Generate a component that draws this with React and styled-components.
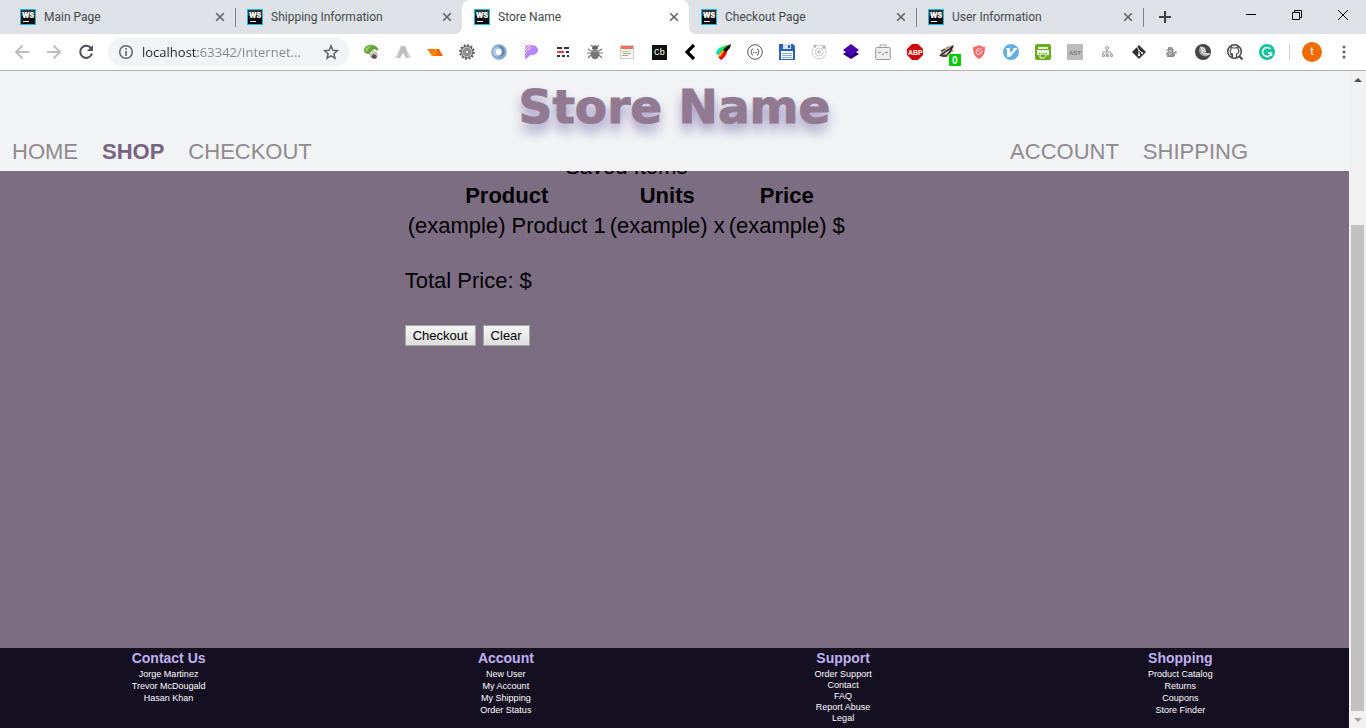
import React from 'react';
import styled, { createGlobalStyle } from 'styled-components';

const Global = createGlobalStyle`
  * { box-sizing: border-box; }
  body { margin: 0; font-family: "Liberation Sans", Arial, sans-serif; }
  button, input { font: inherit; }
  ul { margin: 0; padding: 0; list-style: none; }
`;

const Browser = styled.div`
  display: flex;
  flex-direction: column;
  min-height: 100vh;
`;

/* ---------- tab strip ---------- */

const TabStrip = styled.div`
  display: flex;
  height: 34px;
  padding-left: 8px;
  background: #dee1e6;
  font-family: Roboto, "Noto Sans", sans-serif;
  font-size: 12px;
`;

const Tab = styled.div`
  position: relative;
  display: flex;
  flex: 0 1 227px;
  min-width: 0;
  align-items: center;
  padding: 0 8px 0 12px;
  color: #45494d;
  background: ${(p) => (p.$active ? '#fff' : 'transparent')};
  border-radius: 8px 8px 0 0;

  ${(p) => p.$active && `
    &::before, &::after {
      content: "";
      position: absolute;
      bottom: 0;
      width: 8px;
      height: 8px;
    }
    &::before { left: -8px; background: radial-gradient(circle at 0 0, transparent 8px, #fff 8px); }
    &::after { right: -8px; background: radial-gradient(circle at 100% 0, transparent 8px, #fff 8px); }
  `}
`;

const TabDivider = styled.span`
  position: absolute;
  right: -1px;
  top: 8px;
  width: 1px;
  height: 19px;
  background: #808387;
`;

const TabTitle = styled.button`
  flex: 1;
  min-width: 0;
  padding: 0 0 0 8px;
  border: 0;
  background: none;
  color: inherit;
  text-align: left;
  white-space: nowrap;
  overflow: hidden;
`;

const IconButton = styled.button`
  display: flex;
  flex: none;
  align-items: center;
  justify-content: center;
  width: ${(p) => p.$w || 16}px;
  height: ${(p) => p.$h || 16}px;
  padding: 0;
  border: 0;
  background: none;
  color: ${(p) => p.$color || '#5f6368'};
`;

const WindowControls = styled.div`
  display: flex;
  margin-left: auto;
`;

/* ---------- toolbar ---------- */

const Toolbar = styled.div`
  display: flex;
  align-items: center;
  height: 37px;
  padding: 0 6px;
  background: #fff;
  border-bottom: 1px solid #b6b0b5;
`;

const AddressBar = styled.div`
  display: flex;
  flex: 1;
  min-width: 0;
  align-items: center;
  height: 28px;
  margin: 0 6px;
  padding: 0 10px;
  border-radius: 14px;
  background: #f1f3f4;
`;

const AddressInput = styled.input`
  flex: 1;
  min-width: 0;
  margin-left: 8px;
  padding: 0;
  border: 0;
  outline: 0;
  font-family: "Open Sans", "Noto Sans", sans-serif;
  font-size: 13px;
  color: transparent;
  background: linear-gradient(to right, #202124 56px, #80868b 56px);
  -webkit-background-clip: text;
  background-clip: text;
`;

const Extensions = styled.div`
  display: flex;
`;

const ToolbarDivider = styled.span`
  width: 1px;
  height: 16px;
  margin: 0 12px 0 6px;
  background: #cfd1d4;
`;

const Avatar = styled.button`
  width: 20px;
  height: 20px;
  margin-right: 6px;
  padding: 0;
  border: 0;
  border-radius: 50%;
  background: #ef6c00;
  color: #fff;
  font-family: Roboto, sans-serif;
  font-size: 11px;
  line-height: 20px;
`;

/* ---------- page ---------- */

const Viewport = styled.div`
  display: flex;
  flex: 1;
`;

const Page = styled.div`
  display: flex;
  flex: 1;
  min-width: 0;
  flex-direction: column;
  background: #7d6d83;
`;

const Header = styled.header`
  height: 100px;
  background: #f1f3f5;
`;

const StoreTitle = styled.h1`
  margin: 0;
  padding-top: 4px;
  color: #917991;
  font-family: "Arial Black", "DejaVu Sans", sans-serif;
  font-size: 47px;
  font-weight: 900;
  line-height: 64px;
  text-align: center;
  text-shadow: 0 8px 12px #9c92be;
  -webkit-text-stroke: 1px #917991;
`;

const Nav = styled.nav`
  display: flex;
  justify-content: space-between;
  padding-right: 89px;
`;

const NavGroup = styled.div`
  display: flex;
`;

const NavLink = styled.a`
  padding: 0 12px;
  color: ${(p) => (p.$active ? '#766482' : '#8f8a90')};
  font-size: 22px;
  font-weight: ${(p) => (p.$active ? 700 : 400)};
  line-height: 26px;
  text-decoration: none;
`;

const Main = styled.main`
  flex: 1;
  overflow: hidden;
  padding-left: 30%;
  color: #000;
  font-size: 22px;
  line-height: 26px;
`;

const SavedItems = styled.table`
  margin-top: -17px;
  border-spacing: 2px;

  th, td { padding: 1px; }
  td { white-space: nowrap; }
`;

const Total = styled.p`
  margin: 26px 0 31px;
`;

const Actions = styled.div`
  display: flex;
  gap: 7px;
`;

const ActionButton = styled.button`
  height: 21px;
  padding: 0 7px;
  border: 1px solid #a6a6a6;
  background: linear-gradient(#f6f6f6, #dddddd);
  color: #000;
  font-size: 13px;
  line-height: 19px;
`;

const Footer = styled.footer`
  display: grid;
  grid-template-columns: repeat(4, 1fr);
  height: 80px;
  background: #150f22;
  text-align: center;
`;

const FooterTitle = styled.h2`
  margin: 0;
  color: #bfb0ee;
  font-size: 14px;
  line-height: ${(p) => (p.$dense ? 21 : 20)}px;
`;

const FooterItem = styled.li`
  font-size: 9px;
  line-height: ${(p) => (p.$dense ? 11 : 12)}px;

  a { color: #fff; text-decoration: none; }
`;

/* ---------- scrollbar ---------- */

const Scrollbar = styled.div`
  display: flex;
  flex-direction: column;
  width: 17px;
  padding: 0 2px;
  background: #f1f1f1;
`;

const ScrollSpace = styled.div`
  flex: 137;
`;

const ScrollThumb = styled.div`
  flex: 486;
  background: #c1c1c1;
`;

/* ---------- icons ---------- */

const Icon = ({ size = 16, children, ...rest }) => (
  <svg width={size} height={size} viewBox={`0 0 ${size} ${size}`} fill="none" aria-hidden="true" {...rest}>
    {children}
  </svg>
);

const Favicon = () => (
  <Icon>
    <rect x=".5" y=".5" width="15" height="15" fill="#080808" stroke="#18b9e4" />
    <path d="M1 1h14v6H1z" fill="#333" />
    <text x="2" y="8.500" fill="#fff" fontSize="7" fontWeight="900" fontFamily="Inter, sans-serif">WS</text>
    <path d="M3 12.500h6" stroke="#fff" />
  </Icon>
);

const CloseIcon = () => (
  <Icon size={10}><path d="m1.200 1.200 7.600 7.600m0-7.600L1.200 8.800" stroke="currentColor" strokeWidth="1.600" /></Icon>
);

const mono = '"Liberation Mono", monospace';
const sans = '"Liberation Sans", sans-serif';

const extensions = [
  ['Cleaner', <>
    <path d="M1 7C1 2 6 0 10 1c4 1 6 4 5 6l-4-2-5 5C4 10 1 9 1 7z" fill="#62a536" />
    <path d="M2 6c2-4 6-5 9-4-3 0-6 2-7 6z" fill="#9dd36b" />
    <path d="m6 10 4-3 4 1 1 4-3 3-4-1z" fill="#c5beb9" /><path d="m10 10 3 1 1 3-3 1-3-2z" fill="#5e5552" /><path d="m8 8 2 2" stroke="#eee" />
  </>],
  ['Angular', <><path d="M6 2 0 14h4l3-7zM10 2l6 12h-4L9 7z" fill="#d3d3d3" /><path d="M6 2h2v7l-3 5H3zM8 2h2l3 12h-2L8 9z" fill="#bdbdbd" /></>],
  ['Layout', <><path d="M0 5h9l3 7H5z" fill="#ff7a00" /><path d="M9 5h3l4 7h-5z" fill="#f26400" /><path d="m5 12 4-7" stroke="#ffb366" strokeWidth=".7" /></>],
  ['Settings', <>
    <circle cx="8" cy="8" r="6.700" stroke="#5b5b5b" strokeWidth="2.200" strokeDasharray="2 1.500" />
    <circle cx="8" cy="8" r="5.800" fill="#bbb" stroke="#666" /><circle cx="8" cy="8" r="3.600" stroke="#777" />
    <circle cx="8" cy="8" r="2" fill="#f2f2f2" stroke="#555" />
  </>],
  ['JSON', <><circle cx="8" cy="8" r="5.600" stroke="#88a8cd" strokeWidth="4.400" /><path d="M7 2c5-1 8 4 6 8-2 3-5 3-6 2 5-1 5-6 0-10z" fill="#6688b7" /><path d="M3 11C0 6 4 2 8 3 4 5 4 9 7 13" fill="#b5cbe4" /></>],
  ['Pesticide', <>
    <defs><linearGradient id="pp" x1="0" y1="0" x2="1" y2="1"><stop stopColor="#e187f0" /><stop offset=".5" stopColor="#b985fb" /><stop offset="1" stopColor="#8a9cff" /></linearGradient></defs>
    <path d="M2 1h7c4 0 6 3 6 5.500S12 11 8 11c-2 0-3 4-6 4z" fill="url(#pp)" /><path d="m1 4 4-4M1 7l7-7M1 10l7-7" stroke="#fff" strokeWidth=".9" />
  </>],
  ['Blocks', <><path d="M2 4h5m2 0h5M11 8h3M2 12h3m2 0h3m2 0h2" stroke="#333" strokeWidth="2" /><path d="M2 8h7" stroke="#f44336" strokeWidth="2" /></>],
  ['Bug', <>
    <path d="m1 5 3 2M0 9h4m-3 5 3-3m11-6-3 2m4 2h-4m3 5-3-3M6 3 4 1m6 2 2-2" stroke="#777" strokeWidth="1.200" />
    <ellipse cx="8" cy="10" rx="4.300" ry="5.300" fill="#777" /><path d="M5 5c0-5 6-5 6 0z" fill="#656565" /><path d="M4 7h8" stroke="#aaa" />
  </>],
  ['Reader', <>
    <rect x="1.500" y="1.500" width="13" height="13" fill="#f7f7f7" stroke="#ccc" /><path d="M2 2h12v3H2z" fill="#f26d68" /><path d="M3 7.500h8" stroke="#e6c34b" /><path d="M4 9.500h8" stroke="#78bd7b" /><path d="M3 11.500h6" stroke="#e48b88" />
  </>],
  ['Codebase', <><rect x="1" y="1" width="15" height="15" fill="#111" /><text x="3" y="11" fill="#fff" fontSize="9" fontFamily={mono}>Cb</text></>],
  ['Collapse', <path d="M11 1 4 8l7 7" stroke="#000" strokeWidth="3.200" />],
  ['Color picker', <>
    <path d="M2 11C1 6 8 1 14 1L7 9z" fill="#1de54a" /><path d="M1 10c0-3 2-6 5-7L4 10z" fill="#0dd" />
    <path d="M4 10 13 3c0 5-3 11-7 13-2-1-3-3-2-6z" fill="#f20c0c" /><path d="m3 11 8-7-6 9z" fill="#fb0" /><path d="m8 6 4-4 4-2-1 4-4 4z" fill="#111" />
  </>],
  ['Format JSON', <><circle cx="8" cy="8" r="7.300" stroke="#555" /><path d="M6 5c-2 0-1 2-2 3 1 1 0 3 2 3m4-6c2 0 1 2 2 3-1 1 0 3-2 3" stroke="#555" /><path d="M6 8.500h4" stroke="#555" strokeDasharray="1 .5" /></>],
  ['Save page', <><path d="M0 0h14l2 2v14H0z" fill="#2d61b8" /><path d="M4 0h8v5H4z" fill="#d9e7f8" /><path d="M9 1h2v3H9z" fill="#2d61b8" /><path d="M2 7h12v8H2z" fill="#f6f9fd" /><path d="M3 9.500h10m-10 2h10m-10 2h10" stroke="#8bafda" /></>],
  ['Orbit', <><circle cx="8" cy="8" r="7" stroke="#ccc" /><circle cx="8" cy="8" r="4" stroke="#ccc" /><circle cx="8" cy="8" r="2" fill="#ccc" /><circle cx="4" cy="2" r="1.500" fill="#aaa" /><circle cx="13" cy="3" r="2" fill="#bbb" /></>],
  ['Layers', <><path d="m0 10 8 5 8-5-8-5z" fill="#280085" /><path d="m0 6 8-6 8 6-8 6z" fill="#4b06ae" /></>],
  ['Clipboard', <><rect x=".7" y="3.500" width="14.600" height="12" rx="1" fill="#eee" stroke="#999" /><path d="M5 3V1h6v2" stroke="#999" /><path d="M3 8q1.500 1.500 3 0m4 0q1.500 1.500 3 0M7 10h2" stroke="#777" /></>],
  ['AdBlock', <><path d="M5 0h6l5 5v6l-5 5H5l-5-5V5z" fill="#cf0706" /><text x="1" y="10.800" fill="#fff" fontSize="7" fontWeight="700" fontFamily={sans}>ABP</text></>],
  ['Tracker', <>
    <path d="m0 12 3-5 3-1 1-3 4-1 4-1-2 4 2 2-4 2-2 3-5 1z" fill="#b59a86" /><path d="m1 12 5-4 5-3 3-3-3 6-4 3M2 7l4-2M3 12h5" stroke="#222" strokeWidth="1.300" /><path d="m6 9 4-2-3 4z" fill="#eee" />
    <rect x="10" y="10" width="12" height="12" rx="1" fill="#0c0" /><text x="13" y="20" fill="#fff" fontSize="10" fontWeight="700" fontFamily={sans}>0</text>
  </>],
  ['Shield', <><path d="M8 1c2 1 4 2 6 2 0 6-1 9-6 12-5-3-6-6-6-12 2 0 4-1 6-2z" fill="#f26b6b" /><circle cx="8" cy="7.500" r="3" stroke="#fbd0d0" /><path d="m6 6 4 3" stroke="#fbd0d0" /></>],
  ['Vimium', <><circle cx="8" cy="8" r="8" fill="#62aee5" /><path d="M3 4h4v5l4-4-1-1h4v1L7 13H4V5H3z" fill="#fff" /></>],
  ['Print', <><rect width="16" height="16" rx="2" fill="#6aaa1e" /><path d="M3 3h10v2H3zM2 6h12v5h-2V9H4v2H2z" fill="#e9f4dc" /><path d="M5 10h6v2l-2 2H5z" stroke="#fff" /></>],
  ['AST', <><rect width="16" height="16" fill="#bcbcbc" /><text x="2" y="10.500" fill="#777" fontSize="6" fontWeight="700" fontFamily={sans}>AST</text></>],
  ['Sitemap', <><path d="M8 5v7M4 11V8h8v3" stroke="#999" /><circle cx="8" cy="4" r="1.500" stroke="#999" /><path d="M3.500 10.500h2v2h-2zm4 0h2v2h-2zm4 0h2v2h-2z" stroke="#999" /></>],
  ['Git', <><path d="m8 1 7 7-7 7-7-7z" fill="#333" /><path d="m6 3 2 3v5m0-5 3 3" stroke="#fff" /><circle cx="8" cy="11" r="1.200" fill="#fff" /><circle cx="11" cy="9" r="1" fill="#fff" /></>],
  ['Helper', <><path d="M5 3h4l2 3-1 1 2 2v3H4L3 10l2-3z" fill="#999" /><path d="M3 7l3-3m5 5 2-2v3M4 12.500h7" stroke="#888" /><path d="M6 7h3M6 10h2" stroke="#ddd" /></>],
  ['Notes', <>
    <circle cx="8" cy="8" r="8" fill="#444" /><path d="M5 3c3-1 6 0 6 3v3h4c-1 3-4 4-7 3-3-1-4-3-4-6z" fill="#a5a5a5" />
    <path d="M5 3c1 0 2 1 2 3 0 3 1 4 4 4h4M7 3l3 3M8 6l3 2" stroke="#fff" />
  </>],
  ['GitHub search', <><circle cx="7.500" cy="7.500" r="6.800" stroke="#444" strokeWidth="1.500" /><path d="m12 12 3.500 3.500" stroke="#444" strokeWidth="2" /><path d="M5 13v-2l-2-1M5.500 13v-3C2 9 3 6 4 5.500V3l2 1h3l2-1v2.500c1 .5 2 3.500-1.500 4.500v3" stroke="#444" strokeWidth="1.200" /></>],
  ['Grammarly', <><circle cx="8" cy="8" r="8" fill="#15c39a" /><path d="M11.500 5a4.500 4.500 0 1 0 1 4H9m3.500 0v3" stroke="#fff" strokeWidth="1.500" /></>],
];

const tabs = ['Main Page', 'Shipping Information', 'Store Name', 'Checkout Page', 'User Information'];

const footerColumns = [
  { title: 'Contact Us', items: ['Jorge Martinez', 'Trevor McDougald', 'Hasan Khan'] },
  { title: 'Account', items: ['New User', 'My Account', 'My Shipping', 'Order Status'] },
  { title: 'Support', items: ['Order Support', 'Contact', 'FAQ', 'Report Abuse', 'Legal'], dense: true },
  { title: 'Shopping', items: ['Product Catalog', 'Returns', 'Coupons', 'Store Finder'] },
];

const ACTIVE_TAB = 2;

export default function App() {
  return (
    <Browser>
      <Global />
      <TabStrip>
        {tabs.map((title, i) => (
          <Tab key={title} $active={i === ACTIVE_TAB}>
            <Favicon />
            <TabTitle>{title}</TabTitle>
            <IconButton aria-label={`Close ${title}`} $w={14}><CloseIcon /></IconButton>
            {i !== ACTIVE_TAB && i !== ACTIVE_TAB - 1 && <TabDivider />}
          </Tab>
        ))}
        <IconButton aria-label="New tab" $w={44} $h={34} $color="#3c4043">
          <Icon size={12}><path d="M6 0v12M0 6h12" stroke="currentColor" strokeWidth="2" /></Icon>
        </IconButton>
        <WindowControls>
          <IconButton aria-label="Minimize" $w={46} $h={29} $color="#000">
            <Icon size={10}><path d="M0 4.500h10" stroke="currentColor" /></Icon>
          </IconButton>
          <IconButton aria-label="Restore" $w={46} $h={29} $color="#000">
            <Icon size={10}><path d="M.5 2.500h7v7h-7zM2.500 2.500v-2h7v7h-2" stroke="currentColor" /></Icon>
          </IconButton>
          <IconButton aria-label="Close window" $w={46} $h={29} $color="#000">
            <Icon size={10}><path d="m0 0 10 10M10 0 0 10" stroke="currentColor" /></Icon>
          </IconButton>
        </WindowControls>
      </TabStrip>

      <Toolbar>
        <IconButton aria-label="Back" $w={32} $color="#babcbe">
          <Icon><path d="M15 8H2m6.500-6.500L2 8l6.500 6.500" stroke="currentColor" strokeWidth="1.800" /></Icon>
        </IconButton>
        <IconButton aria-label="Forward" $w={32} $color="#babcbe">
          <Icon><path d="M1 8h13M7.500 1.500 14 8l-6.500 6.500" stroke="currentColor" strokeWidth="1.800" /></Icon>
        </IconButton>
        <IconButton aria-label="Reload" $w={32} $color="#4d5156">
          <Icon><path d="M13 4.200A6 6 0 1 0 14 9.500" stroke="currentColor" strokeWidth="2" /><path d="M15 1v6H9z" fill="currentColor" /></Icon>
        </IconButton>
        <AddressBar>
          <Icon><circle cx="8" cy="8" r="6.300" stroke="#5f6368" strokeWidth="1.500" /><path d="M8 7v5M8 4v1.700" stroke="#5f6368" strokeWidth="1.600" /></Icon>
          <AddressInput aria-label="Address" defaultValue="localhost:63342/Internet..." />
          <IconButton aria-label="Bookmark this page">
            <Icon><path d="m8 1.800 1.800 4.400 4.700.4-3.600 3.100 1.100 4.600L8 11.900l-4 2.400 1.100-4.600-3.600-3.100 4.700-.4z" stroke="currentColor" strokeWidth="1.500" /></Icon>
          </IconButton>
        </AddressBar>
        <Extensions>
          {extensions.map(([name, art]) => (
            <IconButton key={name} aria-label={name} $w={32}>
              <Icon overflow="visible">{art}</Icon>
            </IconButton>
          ))}
        </Extensions>
        <ToolbarDivider />
        <Avatar aria-label="Profile">t</Avatar>
        <IconButton aria-label="Menu" $w={32} $color="#5f6368">
          <Icon><circle cx="8" cy="3" r="1.500" fill="currentColor" /><circle cx="8" cy="8" r="1.500" fill="currentColor" /><circle cx="8" cy="13" r="1.500" fill="currentColor" /></Icon>
        </IconButton>
      </Toolbar>

      <Viewport>
        <Page>
          <Header>
            <StoreTitle>Store Name</StoreTitle>
            <Nav>
              <NavGroup>
                <NavLink href="#home">HOME</NavLink>
                <NavLink href="#shop" $active>SHOP</NavLink>
                <NavLink href="#checkout">CHECKOUT</NavLink>
              </NavGroup>
              <NavGroup>
                <NavLink href="#account">ACCOUNT</NavLink>
                <NavLink href="#shipping">SHIPPING</NavLink>
              </NavGroup>
            </Nav>
          </Header>
          <Main>
            <SavedItems>
              <caption>Saved Items</caption>
              <thead>
                <tr><th>Product</th><th>Units</th><th>Price</th></tr>
              </thead>
              <tbody>
                <tr><td>(example) Product 1</td><td>(example) x</td><td>(example) $</td></tr>
              </tbody>
            </SavedItems>
            <Total>Total Price: $</Total>
            <Actions>
              <ActionButton>Checkout</ActionButton>
              <ActionButton>Clear</ActionButton>
            </Actions>
          </Main>
          <Footer>
            {footerColumns.map(({ title, items, dense }) => (
              <section key={title}>
                <FooterTitle $dense={dense}>{title}</FooterTitle>
                <ul>
                  {items.map((item) => (
                    <FooterItem key={item} $dense={dense}><a href="#footer">{item}</a></FooterItem>
                  ))}
                </ul>
              </section>
            ))}
          </Footer>
        </Page>
        <Scrollbar>
          <IconButton aria-label="Scroll up" $w={13} $h={17} $color="#505050">
            <Icon size={8}><path d="M0 6h8L4 2z" fill="currentColor" /></Icon>
          </IconButton>
          <ScrollSpace />
          <ScrollThumb />
          <IconButton aria-label="Scroll down" $w={13} $h={17} $color="#a3a3a3">
            <Icon size={8}><path d="M0 2h8L4 6z" fill="currentColor" /></Icon>
          </IconButton>
        </Scrollbar>
      </Viewport>
    </Browser>
  );
}
